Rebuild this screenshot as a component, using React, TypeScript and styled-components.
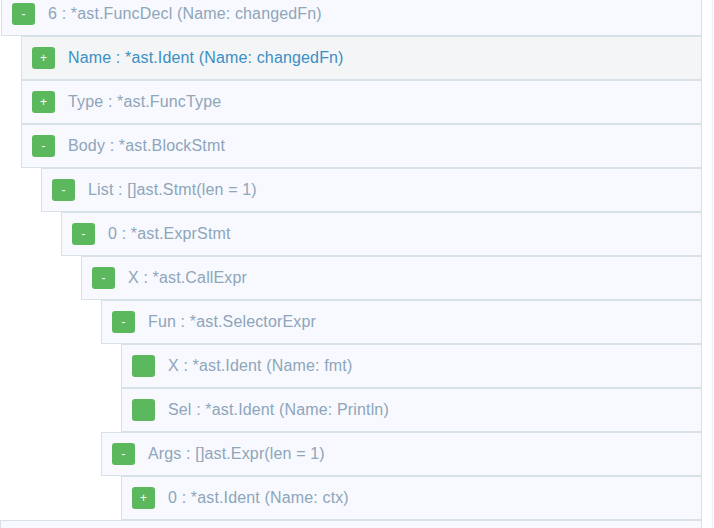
import React from "react";
import styled, { createGlobalStyle } from "styled-components";

const Global = createGlobalStyle`
  html, body { margin: 0; padding: 0; background: #ffffff; }
  body { font-family: "Liberation Sans", Arial, sans-serif; overflow: hidden; }
`;

type Node = {
  label: string;
  toggle: "+" | "-" | "";
  active?: boolean;
  children?: Node[];
};

const tree: Node = {
  label: "6 : *ast.FuncDecl (Name: changedFn)",
  toggle: "-",
  children: [
    { label: "Name : *ast.Ident (Name: changedFn)", toggle: "+", active: true },
    { label: "Type : *ast.FuncType", toggle: "+" },
    {
      label: "Body : *ast.BlockStmt",
      toggle: "-",
      children: [
        {
          label: "List : []ast.Stmt(len = 1)",
          toggle: "-",
          children: [
            {
              label: "0 : *ast.ExprStmt",
              toggle: "-",
              children: [
                {
                  label: "X : *ast.CallExpr",
                  toggle: "-",
                  children: [
                    {
                      label: "Fun : *ast.SelectorExpr",
                      toggle: "-",
                      children: [
                        { label: "X : *ast.Ident (Name: fmt)", toggle: "" },
                        { label: "Sel : *ast.Ident (Name: Println)", toggle: "" },
                      ],
                    },
                    {
                      label: "Args : []ast.Expr(len = 1)",
                      toggle: "-",
                      children: [{ label: "0 : *ast.Ident (Name: ctx)", toggle: "+" }],
                    },
                  ],
                },
              ],
            },
          ],
        },
      ],
    },
  ],
};

const Panel = styled.div`
  width: 713px;
  height: 528px;
  border-right: 1px solid #eef1f5;
  box-sizing: border-box;
  padding-right: 10px;
  overflow: hidden;
`;

const Scroller = styled.div`
  margin-top: -8px;
  padding-left: 1px;
`;

const Item = styled.div``;

const Header = styled.div<{ $active?: boolean }>`
  display: flex;
  align-items: center;
  gap: 13px;
  height: 44px;
  box-sizing: border-box;
  padding-left: 10px;
  border: 1px solid #d9e1e8;
  background: ${(p) => (p.$active ? "#f4f5f6" : "#f7f9fe")};
  color: ${(p) => (p.$active ? "#3b8fc4" : "#8ea5ba")};
  font-size: 16px;
  letter-spacing: 0.15px;
  white-space: nowrap;
`;

const Label = styled.span`
  margin-top: -1px;
`;

const Toggle = styled.span`
  display: flex;
  align-items: center;
  justify-content: center;
  width: 23px;
  height: 22px;
  border-radius: 3px;
  background: #5cb85c;
  color: #ffffff;
  font-size: 12px;
  line-height: 1;
  letter-spacing: 0;
  flex-shrink: 0;
`;

const Children = styled.div`
  margin-left: 20px;
`;

const NextSibling = styled.div`
  height: 44px;
  margin-left: -1px;
  border: 1px solid #d9e1e8;
  background: #f7f9fe;
`;

function TreeNode({ node }: { node: Node }) {
  return (
    <Item>
      <Header $active={node.active}>
        <Toggle>{node.toggle}</Toggle>
        <Label>{node.label}</Label>
      </Header>
      {node.children && (
        <Children>
          {node.children.map((c, i) => (
            <TreeNode key={i} node={c} />
          ))}
        </Children>
      )}
    </Item>
  );
}

export default function App() {
  return (
    <>
      <Global />
      <Panel>
        <Scroller>
          <TreeNode node={tree} />
          <NextSibling />
        </Scroller>
      </Panel>
    </>
  );
}
